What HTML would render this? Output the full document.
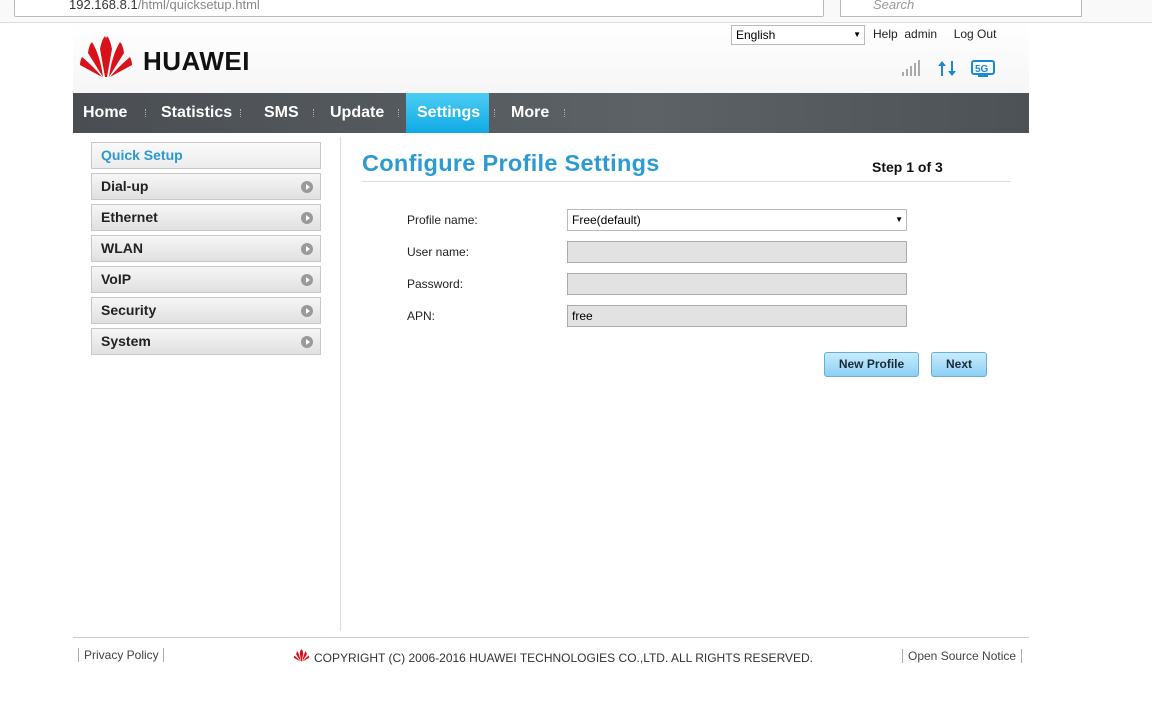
<!DOCTYPE html>
<html><head><style>
body{margin:0;width:1152px;height:714px;background:#fff;font-family:"Liberation Sans",Arial,sans-serif;position:relative;overflow:hidden}
.a{position:absolute}
.nav span{position:absolute;top:0;height:40px;line-height:40px;color:#fff;font-weight:bold;font-size:16px}
.sep{position:absolute;top:16px;width:1px;height:8px;border-left:1px dotted #aaa}
.mi{position:absolute;left:91px;width:228px;height:25px;border:1px solid #c8c8c8;background:linear-gradient(#f6f6f6,#e0e0e0);font-weight:bold;font-size:14px;line-height:25px;text-indent:9px;color:#222}
.mi i{position:absolute;right:7px;top:7px;width:12px;height:12px;border-radius:50%;background:#9a9a9a}
.mi i:after{content:"";position:absolute;left:5px;top:3px;border-left:4px solid #fff;border-top:3px solid transparent;border-bottom:3px solid transparent}
.lb{position:absolute;left:407px;font-size:12px;color:#222}
.in{position:absolute;left:567px;width:338px;height:20px;border:1px solid #aaa;background:#e2e2e2;font-size:12px;line-height:20px;text-indent:4px}
.btn{position:absolute;top:352px;height:23px;border:1px solid #6aaed8;border-radius:3px;background:linear-gradient(#c9ecfc,#8bd0f5);font-weight:bold;font-size:12px;line-height:23px;text-align:center;color:#1a2a3a}
</style></head><body>
<div class="a" style="left:0;top:0;width:1152px;height:22px;background:#f9f9fa;border-bottom:1px solid #ddd"></div>
<div class="a" style="left:14px;top:-6px;width:808px;height:21px;border:1px solid #bbb;border-radius:2px;background:#fff;font-size:13px;color:#333;line-height:20px"><span style="margin-left:54px">192.168.8.1</span><span style="color:#888">/html/quicksetup.html</span></div>
<div class="a" style="left:840px;top:-6px;width:240px;height:21px;border:1px solid #bbb;background:#fff;font-size:13px;color:#999;line-height:20px;font-style:italic"><span style="margin-left:32px">Search</span></div>
<div class="a" style="left:73px;top:23px;width:956px;height:70px;background:linear-gradient(#fff,#f6f6f6)"></div>
<svg class="a" style="left:78px;top:35px" width="56" height="44" viewBox="0 0 56 44">
<g fill="#d8121a"><path d="M27 42 L22 14 Q24 4 27 1 Q31 8 28 42Z"/><path d="M29 42 L34 14 Q32 4 29 1 Q25 8 28 42Z"/>
<path d="M25 42 L10 18 Q11 10 14 7 Q22 20 25 42Z"/><path d="M31 42 L46 18 Q45 10 42 7 Q34 20 31 42Z"/>
<path d="M24 42 L2 30 Q2 26 4 22 Q16 32 24 42Z"/><path d="M32 42 L54 30 Q54 26 52 22 Q40 32 32 42Z"/></g></svg>
<div class="a" style="left:143px;top:46px;font-size:26px;font-weight:bold;color:#111;letter-spacing:0.5px">HUAWEI</div>
<div class="a" style="left:731px;top:25px;width:132px;height:18px;border:1px solid #bbb;background:#fff;font-size:12px;line-height:18px;text-indent:4px">English<span style="position:absolute;right:3px;font-size:8px">▼</span></div>
<div class="a" style="left:873px;top:27px;font-size:12px;color:#222">Help&nbsp; admin&nbsp; &nbsp; &nbsp;Log Out</div>
<svg class="a" style="left:902px;top:58px" width="100" height="20"><g fill="#aaa"><rect x="0" y="14" width="2" height="4"/><rect x="4" y="11" width="2" height="7"/><rect x="8" y="8" width="2" height="10"/><rect x="12" y="5" width="2" height="13"/><rect x="16" y="2" width="2" height="16"/></g>
<g fill="#1a8ad0"><path d="M40 3l-4 5h3v10h2V8h3z"/><path d="M50 18l4-5h-3V3h-2v10h-3z"/><rect x="70" y="3" width="22" height="13" rx="2" fill="none" stroke="#1a8ad0" stroke-width="2"/><text x="73" y="14" font-size="10" font-weight="bold" font-family="Liberation Sans">5G</text><rect x="76" y="17" width="10" height="2"/></g></svg>
<div class="a nav" style="left:73px;top:93px;width:956px;height:40px;background:linear-gradient(90deg,#4a4e52,#5c6266 60%,#4c5256)">
<span style="left:10px">Home</span><div class="sep" style="left:72px"></div>
<span style="left:88px">Statistics</span><div class="sep" style="left:167px"></div>
<span style="left:191px">SMS</span><div class="sep" style="left:240px"></div>
<span style="left:257px">Update</span><div class="sep" style="left:325px"></div>
<div style="position:absolute;left:333px;top:0;width:83px;height:40px;background:linear-gradient(#4dcdf5,#0fa9e4)"></div>
<span style="left:344px">Settings</span><div class="sep" style="left:421px"></div>
<span style="left:438px">More</span><div class="sep" style="left:491px"></div>
</div>
<div class="mi" style="top:142px;background:linear-gradient(#fafafa,#ececec);color:#2a9ad0">Quick Setup</div>
<div class="mi" style="top:173px">Dial-up<i></i></div>
<div class="mi" style="top:204px">Ethernet<i></i></div>
<div class="mi" style="top:235px">WLAN<i></i></div>
<div class="mi" style="top:266px">VoIP<i></i></div>
<div class="mi" style="top:297px">Security<i></i></div>
<div class="mi" style="top:328px">System<i></i></div>
<div class="a" style="left:340px;top:137px;width:1px;height:494px;background:#ddd"></div>
<div class="a" style="left:362px;top:150px;font-size:23.5px;font-weight:bold;color:#2b9bd1;letter-spacing:0.3px">Configure Profile Settings</div>
<div class="a" style="left:872px;top:159px;font-size:14px;font-weight:bold;color:#111">Step 1 of 3</div>
<div class="a" style="left:362px;top:181px;width:649px;height:1px;background:#ddd"></div>
<div class="lb" style="top:213px">Profile name:</div>
<div class="in" style="top:209px;background:#fff;border-color:#bbb">Free(default)<span style="position:absolute;right:3px;font-size:8px">▼</span></div>
<div class="lb" style="top:245px">User name:</div><div class="in" style="top:241px"></div>
<div class="lb" style="top:277px">Password:</div><div class="in" style="top:273px"></div>
<div class="lb" style="top:309px">APN:</div><div class="in" style="top:305px">free</div>
<div class="btn" style="left:824px;width:93px">New Profile</div>
<div class="btn" style="left:931px;width:54px">Next</div>
<div class="a" style="left:73px;top:637px;width:956px;height:1px;background:#ccc"></div>
<div class="a" style="left:78px;top:648px;font-size:12px;color:#444;border-left:1px solid #aaa;border-right:1px solid #aaa;padding:0 4px 0 5px">Privacy Policy</div>
<svg class="a" style="left:292px;top:649px" width="19" height="13" viewBox="0 0 56 44"><g fill="#d8121a"><path d="M27 42 L22 14 Q24 4 27 1 Q31 8 28 42Z"/><path d="M29 42 L34 14 Q32 4 29 1 Q25 8 28 42Z"/><path d="M25 42 L10 18 Q11 10 14 7 Q22 20 25 42Z"/><path d="M31 42 L46 18 Q45 10 42 7 Q34 20 31 42Z"/><path d="M24 42 L2 30 Q2 26 4 22 Q16 32 24 42Z"/><path d="M32 42 L54 30 Q54 26 52 22 Q40 32 32 42Z"/></g></svg>
<div class="a" style="left:314px;top:651px;font-size:12px;color:#333">COPYRIGHT (C) 2006-2016 HUAWEI TECHNOLOGIES CO.,LTD. ALL RIGHTS RESERVED.</div>
<div class="a" style="left:902px;top:649px;font-size:12px;color:#444;border-left:1px solid #aaa;border-right:1px solid #aaa;padding:0 5px">Open Source Notice</div>
</body></html>
